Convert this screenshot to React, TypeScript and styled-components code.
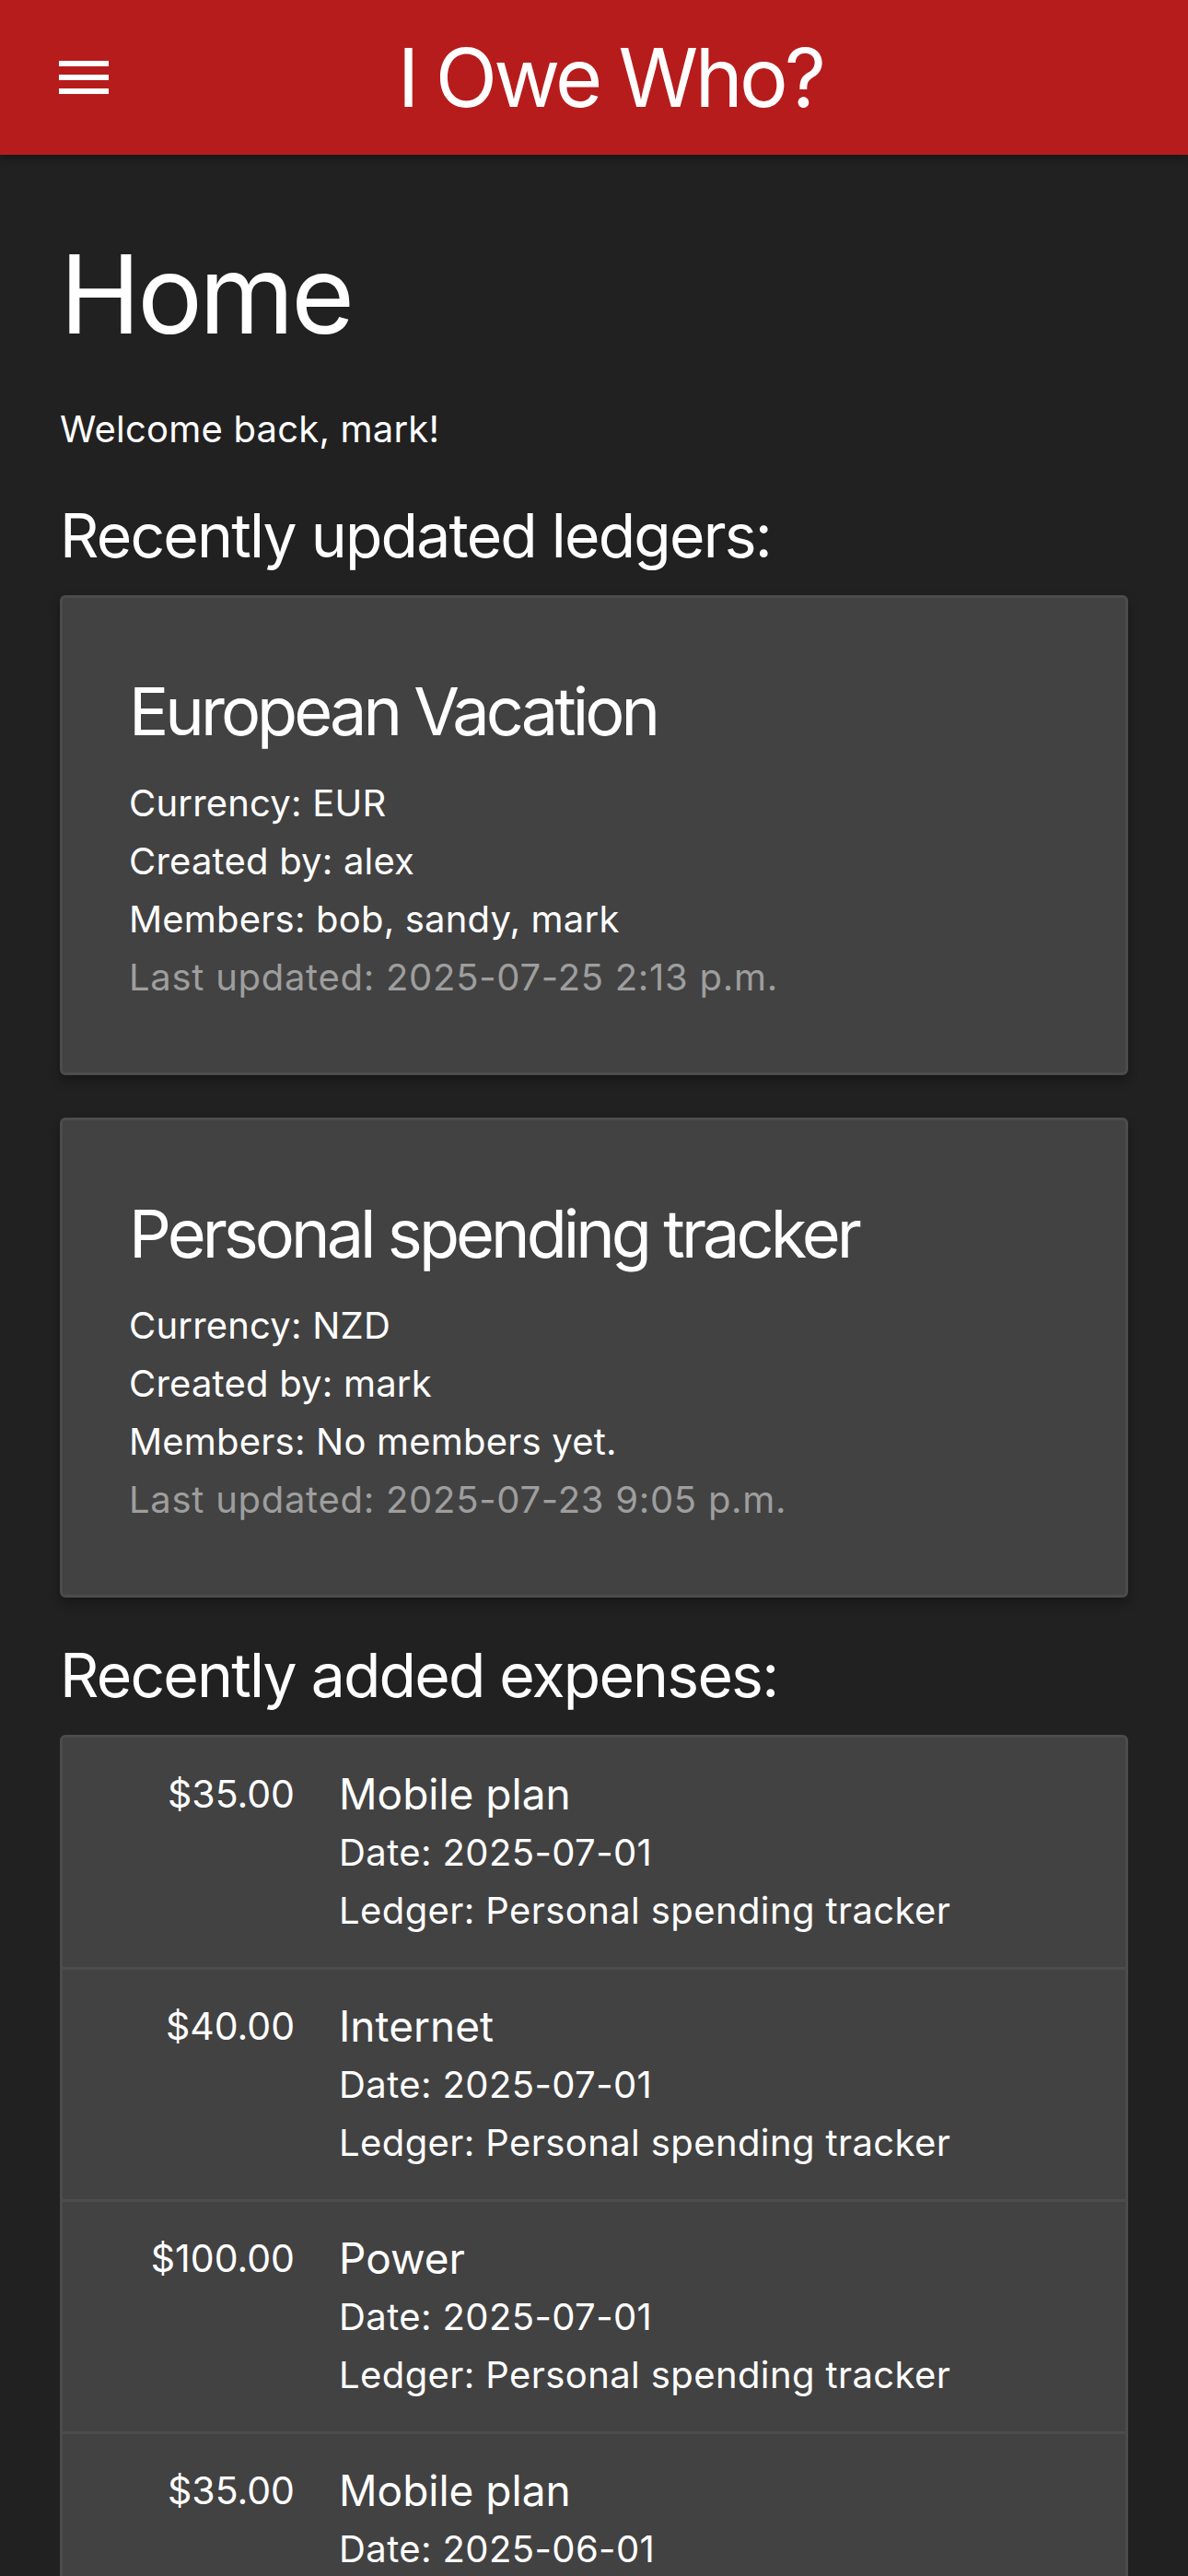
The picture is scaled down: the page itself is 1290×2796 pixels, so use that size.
import React from 'react';
import styled, { createGlobalStyle } from 'styled-components';

interface Ledger {
  id: number;
  name: string;
  currency: string;
  createdBy: string;
  members: string[];
  updated: string;
}

interface Expense {
  id: number;
  amount: string;
  title: string;
  date: string;
  ledger: string;
}

const ledgers: Ledger[] = [
  {
    id: 1,
    name: 'European Vacation',
    currency: 'EUR',
    createdBy: 'alex',
    members: ['bob', 'sandy', 'mark'],
    updated: '2025-07-25 2:13 p.m.',
  },
  {
    id: 2,
    name: 'Personal spending tracker',
    currency: 'NZD',
    createdBy: 'mark',
    members: [],
    updated: '2025-07-23 9:05 p.m.',
  },
];

const expenses: Expense[] = [
  { id: 1, amount: '$35.00', title: 'Mobile plan', date: '2025-07-01', ledger: 'Personal spending tracker' },
  { id: 2, amount: '$40.00', title: 'Internet', date: '2025-07-01', ledger: 'Personal spending tracker' },
  { id: 3, amount: '$100.00', title: 'Power', date: '2025-07-01', ledger: 'Personal spending tracker' },
  { id: 4, amount: '$35.00', title: 'Mobile plan', date: '2025-06-01', ledger: 'Personal spending tracker' },
  { id: 5, amount: '$40.00', title: 'Internet', date: '2025-06-01', ledger: 'Personal spending tracker' },
];

const GlobalStyle = createGlobalStyle`
  html, body {
    margin: 0;
    padding: 0;
    background: #212121;
  }
  body {
    font-family: Inter, "Noto Sans", "Liberation Sans", sans-serif;
    color: #ffffff;
    -webkit-font-smoothing: antialiased;
  }
  * {
    box-sizing: border-box;
  }
`;

const Nav = styled.nav`
  height: 168px;
  background-color: #b71c1c;
  display: grid;
  grid-template-columns: 1fr auto 1fr;
  align-items: center;
  padding-left: 55px;
  box-shadow: 0 4px 10px rgba(0, 0, 0, 0.3);
`;

const MenuButton = styled.button`
  width: 72px;
  height: 72px;
  padding: 0;
  border: none;
  background: none;
  color: #ffffff;
  cursor: pointer;
  display: flex;
  justify-content: flex-start;

  svg {
    display: block;
  }
`;

const Brand = styled.a`
  font-size: 88px;
  line-height: 168px;
  letter-spacing: -0.042em;
  color: #ffffff;
  text-decoration: none;
  white-space: nowrap;
  margin-left: -20px;
`;

const Container = styled.main`
  width: 1160px;
  margin: 0 auto;
  padding-bottom: 60px;
`;

const PageTitle = styled.h3`
  font-size: 118px;
  font-weight: 400;
  line-height: 132px;
  letter-spacing: -0.03em;
  margin: 85px 0 49px;
`;

const Welcome = styled.p`
  font-size: 40px;
  line-height: 63px;
  letter-spacing: 0.005em;
  margin: 0;
`;

const SectionTitle = styled.h5<{ $top: number }>`
  font-size: 66px;
  font-weight: 400;
  line-height: 76px;
  letter-spacing: -0.027em;
  margin: ${(p) => p.$top}px 0 27px;
`;

const Card = styled.div`
  background-color: #424242;
  border: 3px solid #4c4c4c;
  border-radius: 6px;
  box-shadow: 0 6px 12px rgba(0, 0, 0, 0.3);
  padding: 75px 72px 72px;
  margin-bottom: 46px;
`;

const CardTitle = styled.span`
  display: block;
  font-size: 72px;
  line-height: 96px;
  letter-spacing: -0.055em;
  margin-bottom: 20px;
`;

const CardLine = styled.p<{ $muted?: boolean }>`
  font-size: 40px;
  line-height: 63px;
  letter-spacing: ${(p) => (p.$muted ? '0.018em' : '0.005em')};
  margin: 0;
  color: ${(p) => (p.$muted ? '#9e9e9e' : '#ffffff')};
`;

const Collection = styled.ul`
  list-style: none;
  margin: 0;
  padding: 0;
  background-color: #424242;
  border: 3px solid #4c4c4c;
  border-radius: 6px;
  overflow: hidden;
`;

const ExpenseRow = styled.li`
  display: grid;
  grid-template-columns: 192px 1fr;
  column-gap: 48px;
  padding: 30px 60px;
  border-bottom: 3px solid #4c4c4c;

  &:last-child {
    border-bottom: none;
  }
`;

const Amount = styled.span`
  font-size: 41px;
  line-height: 63px;
  text-align: right;
`;

const ExpenseBody = styled.div`
  display: flex;
  flex-direction: column;
`;

const ExpenseTitle = styled.span`
  font-size: 46px;
  line-height: 63px;
`;

const ExpenseLine = styled.span`
  font-size: 40px;
  line-height: 63px;
  letter-spacing: 0.01em;
`;

const MenuIcon = () => (
  <svg width="72" height="72" viewBox="0 0 24 24" fill="currentColor">
    <path d="M3 18h18v-2H3v2zm0-5h18v-2H3v2zm0-7v2h18V6H3z" />
  </svg>
);

const App: React.FC = () => {
  return (
    <>
      <GlobalStyle />
      <Nav>
        <MenuButton aria-label="menu">
          <MenuIcon />
        </MenuButton>
        <Brand href="#">I Owe Who?</Brand>
        <div />
      </Nav>
      <Container>
        <PageTitle>Home</PageTitle>
        <Welcome>Welcome back, mark!</Welcome>

        <SectionTitle $top={46}>Recently updated ledgers:</SectionTitle>
        {ledgers.map((ledger) => (
          <Card key={ledger.id}>
            <CardTitle>{ledger.name}</CardTitle>
            <CardLine>Currency: {ledger.currency}</CardLine>
            <CardLine>Created by: {ledger.createdBy}</CardLine>
            <CardLine>
              Members: {ledger.members.length ? ledger.members.join(', ') : 'No members yet.'}
            </CardLine>
            <CardLine $muted>Last updated: {ledger.updated}</CardLine>
          </Card>
        ))}

        <SectionTitle $top={0}>Recently added expenses:</SectionTitle>
        <Collection>
          {expenses.map((expense) => (
            <ExpenseRow key={expense.id}>
              <Amount>{expense.amount}</Amount>
              <ExpenseBody>
                <ExpenseTitle>{expense.title}</ExpenseTitle>
                <ExpenseLine>Date: {expense.date}</ExpenseLine>
                <ExpenseLine>Ledger: {expense.ledger}</ExpenseLine>
              </ExpenseBody>
            </ExpenseRow>
          ))}
        </Collection>
      </Container>
    </>
  );
};

export default App;
